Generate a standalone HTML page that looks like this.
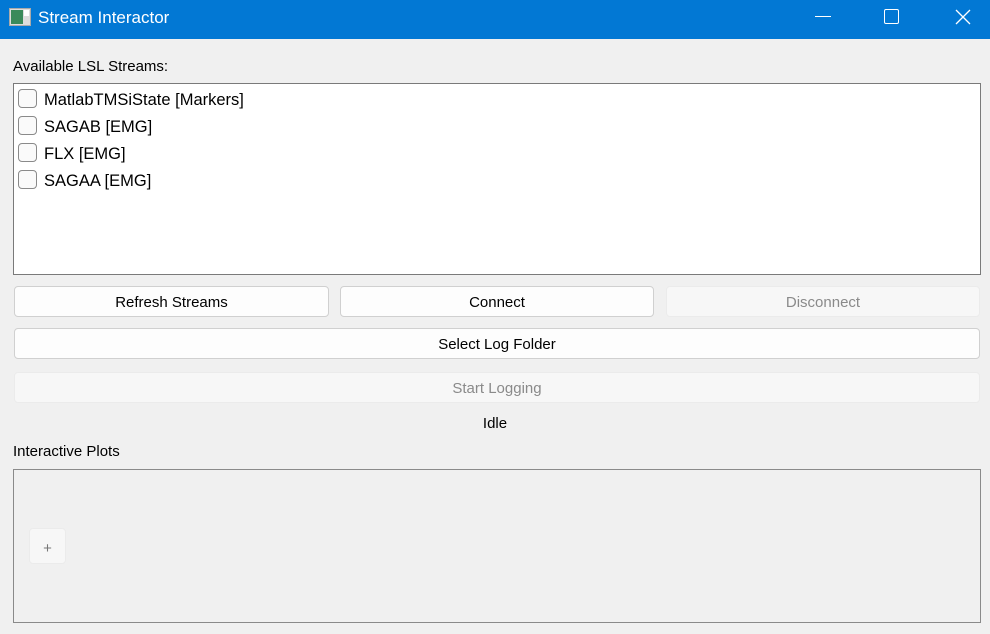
<!DOCTYPE html>
<html><head><style>
body{margin:0;width:990px;height:634px;background:#f0f0f0;font-family:"Liberation Sans","DejaVu Sans",sans-serif;font-size:15px;color:#000;position:relative;overflow:hidden}
.a{position:absolute}
.tb{left:0;top:0;width:990px;height:39px;background:#0278d4;color:#fff}
.btn{position:absolute;background:#fdfdfd;border:1px solid #d0d0d0;border-radius:4px;box-sizing:border-box;text-align:center;line-height:32px;font-size:15px}
.dis{background:#f7f7f7;border-color:#ebebeb;color:#8a8a8a}
.cb{position:absolute;left:18px;width:19px;height:19px;border:1px solid #8a8a8a;border-radius:4px;box-sizing:border-box;background:#fafafa}
.it{position:absolute;left:44px;font-size:16.5px}
</style></head><body>
<div class="a tb">
 <svg class="a" style="left:9px;top:8px" width="22" height="18"><rect x="0.5" y="0.5" width="21" height="17" fill="#ddd" stroke="#aaa"/><rect x="2" y="2" width="12" height="14" fill="#3a8a5a"/><rect x="15" y="2" width="5" height="6" fill="#fff"/></svg>
 <div class="a" style="left:38px;top:8px;font-size:17px">Stream Interactor</div>
 <div class="a" style="left:815px;top:16px;width:16px;height:1px;background:#fff"></div>
 <div class="a" style="left:884px;top:9px;width:13px;height:13px;border:1px solid #fff;border-radius:2px"></div>
 <svg class="a" style="left:955px;top:9px" width="16" height="16"><path d="M1 1L15 15M15 1L1 15" stroke="#fff" stroke-width="1.3"/></svg>
</div>
<div class="a" style="left:13px;top:58px">Available LSL Streams:</div>
<div class="a" style="left:13px;top:83px;width:966px;height:190px;background:#fff;border:1px solid #7a7a7a"></div>
<div class="cb" style="top:89px"></div><div class="it" style="top:91px">MatlabTMSiState [Markers]</div>
<div class="cb" style="top:116px"></div><div class="it" style="top:118px">SAGAB [EMG]</div>
<div class="cb" style="top:143px"></div><div class="it" style="top:145px">FLX [EMG]</div>
<div class="cb" style="top:170px"></div><div class="it" style="top:172px">SAGAA [EMG]</div>
<div class="btn" style="left:14px;top:286px;width:315px;height:31px">Refresh Streams</div>
<div class="btn" style="left:340px;top:286px;width:314px;height:31px">Connect</div>
<div class="btn dis" style="left:666px;top:286px;width:314px;height:31px">Disconnect</div>
<div class="btn" style="left:14px;top:328px;width:966px;height:31px">Select Log Folder</div>
<div class="btn dis" style="left:14px;top:372px;width:966px;height:31px">Start Logging</div>
<div class="a" style="left:0;width:990px;text-align:center;top:415px">Idle</div>
<div class="a" style="left:13px;top:443px">Interactive Plots</div>
<div class="a" style="left:13px;top:469px;width:966px;height:152px;border:1px solid #8a8a8a"></div>
<div class="btn dis" style="left:29px;top:528px;width:37px;height:36px;line-height:40px;color:#777">+</div>
</body></html>
